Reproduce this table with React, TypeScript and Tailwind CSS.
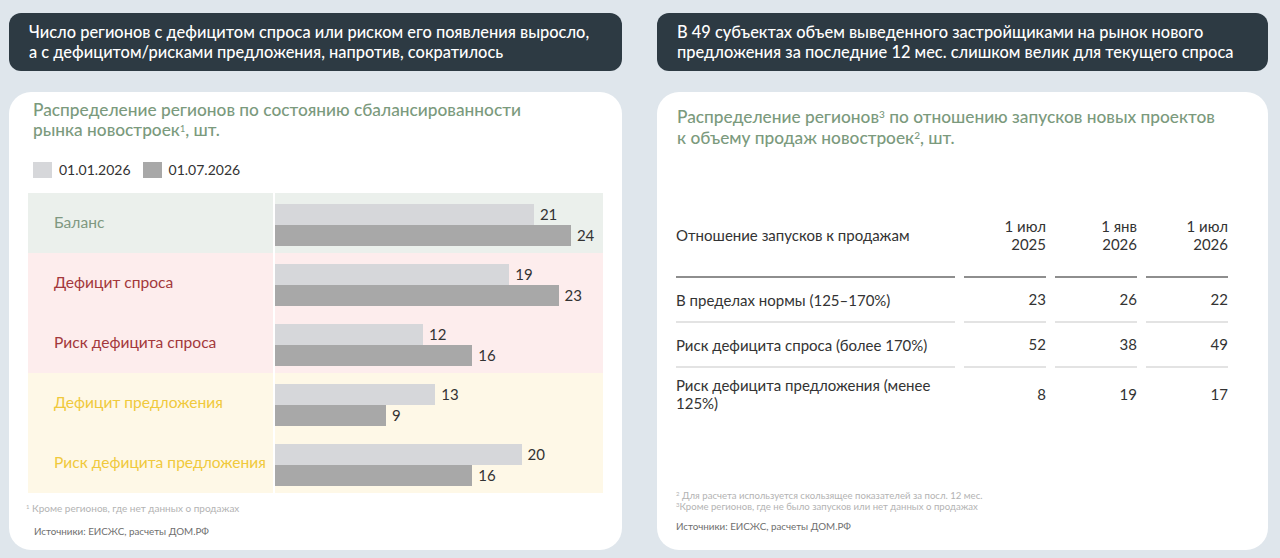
import React from "react";

const font = { fontFamily: "Lato, 'Noto Sans', sans-serif" };

const unit = 12.33;

const rows = [
  { label: "Баланс", band: "green", a: 21, b: 24 },
  { label: "Дефицит спроса", band: "red", a: 19, b: 23 },
  { label: "Риск дефицита спроса", band: "red", a: 12, b: 16 },
  { label: "Дефицит предложения", band: "yellow", a: 13, b: 9 },
  { label: "Риск дефицита предложения", band: "yellow", a: 20, b: 16 },
];

const bandBg: Record<string, string> = {
  green: "bg-[#ebf0ec]",
  red: "bg-[#fdeded]",
  yellow: "bg-[#fef8e7]",
};

const bandText: Record<string, string> = {
  green: "text-[#7f9881]",
  red: "text-[#a3383b]",
  yellow: "text-[#f0c93c]",
};

const table = [
  { label: "В пределах нормы (125–170%)", v: [23, 26, 22] },
  { label: "Риск дефицита спроса (более 170%)", v: [52, 38, 49] },
  { label: "Риск дефицита предложения (менее 125%)", v: [8, 19, 17] },
];

const Bar = ({ value, color }: { value: number; color: string }) => (
  <div className="flex items-center h-[21px]">
    <div className={`h-full ${color}`} style={{ width: value * unit }} />
    <span className="ml-[6px] text-[15px] text-[#333]">{value}</span>
  </div>
);

const Header = ({ children }: { children: React.ReactNode }) => (
  <div className="h-[58px] rounded-xl bg-[#2d3a43] px-[20px] flex items-center text-white text-[16.4px] leading-[20px] font-medium">
    <p>{children}</p>
  </div>
);

export default function App() {
  return (
    <div style={font} className="w-[1280px] h-[558px] bg-[#dfe6ec] pl-[9px] pt-[13px] flex gap-[35px] overflow-hidden">
      {/* left */}
      <div className="w-[613px] flex flex-col gap-[21px]">
        <Header>
          Число регионов с дефицитом спроса или риском его появления выросло,
          <br />а с дефицитом/рисками предложения, напротив, сократилось
        </Header>

        <div className="h-[458px] bg-white rounded-[22px] pt-[8px] flex flex-col">
          <h2 className="px-[24px] text-[17.3px] leading-[20px] font-medium text-[#7b9a7d]">
            Распределение регионов по состоянию сбалансированности
            <br />
            рынка новостроек<sup className="text-[9px]">1</sup>, шт.
          </h2>

          <div className="px-[24px] mt-[19px] flex items-center text-[14px] text-[#333]">
            <span className="w-[19px] h-[16px] bg-[#d6d7da]" />
            <span className="ml-[7px]">01.01.2026</span>
            <span className="ml-[12px] w-[19px] h-[16px] bg-[#a8a8a8]" />
            <span className="ml-[7px]">01.07.2026</span>
          </div>

          <div className="mx-[19px] mt-[13px] flex flex-col">
            {rows.map((r) => (
              <div key={r.label} className={`flex h-[60px] ${bandBg[r.band]}`}>
                <div className={`w-[245px] pl-[26px] flex items-center text-[15.6px] ${bandText[r.band]}`}>
                  {r.label}
                </div>
                <div className="flex-1 border-l-2 border-white pt-[11px]">
                  <Bar value={r.a} color="bg-[#d6d7da]" />
                  <Bar value={r.b} color="bg-[#a8a8a8]" />
                </div>
              </div>
            ))}
          </div>

          <p className="mt-[8px] pl-[17px] text-[10px] text-[#b3b3b3]">
            <sup className="text-[6px]">1</sup> Кроме регионов, где нет данных о продажах
          </p>
          <p className="mt-[8px] pl-[25px] text-[9.8px] text-[#6e6e6e]">
            Источники: ЕИСЖС, расчеты ДОМ.РФ
          </p>
        </div>
      </div>

      {/* right */}
      <div className="w-[611px] flex flex-col gap-[21px]">
        <Header>
          В 49 субъектах объем выведенного застройщиками на рынок нового
          <br />
          предложения за последние 12 мес. слишком велик для текущего спроса
        </Header>

        <div className="h-[458px] bg-white rounded-[22px] pt-[14px] pb-[18px] flex flex-col">
          <h2 className="px-[20px] text-[17.3px] leading-[21px] font-medium text-[#7b9a7d]">
            Распределение регионов<sup className="text-[10px]">3</sup> по отношению запусков новых проектов
            <br />к объему продаж новостроек<sup className="text-[10px]">2</sup>, шт.
          </h2>

          <div className="mt-[69px] px-[19px] grid grid-cols-[279px_82px_82px_82px] gap-x-[9px] text-[15px] text-[#333]">
            <div className="border-b-2 border-[#8e8e8e] pb-[23px] pt-[9px] leading-[18px]">
              Отношение запусков к продажам
            </div>
            {["1 июл|2025", "1 янв|2026", "1 июл|2026"].map((h, i) => (
              <div key={i} className="border-b-2 border-[#8e8e8e] pb-[23px] text-right leading-[18px]">
                {h.split("|")[0]}
                <br />
                {h.split("|")[1]}
              </div>
            ))}

            {table.map((r, ri) => (
              <React.Fragment key={r.label}>
                <div
                  className={`flex items-center leading-[18px] ${
                    ri < 2 ? "h-[45px] border-b-2 border-[#e3e3e3]" : "pt-[8px]"
                  }`}
                >
                  {r.label}
                </div>
                {r.v.map((v, i) => (
                  <div
                    key={i}
                    className={`flex items-center justify-end ${
                      ri < 2 ? "h-[45px] border-b-2 border-[#e3e3e3]" : "pt-[8px]"
                    }`}
                  >
                    {v}
                  </div>
                ))}
              </React.Fragment>
            ))}
          </div>

          <div className="mt-auto px-[19px] text-[9.6px] leading-[11px] text-[#b3b3b3]">
            <p>
              <sup className="text-[6px]">2</sup> Для расчета используется скользящее показателей за посл. 12 мес.
            </p>
            <p>
              <sup className="text-[6px]">3</sup>Кроме регионов, где не было запусков или нет данных о продажах
            </p>
            <p className="mt-[9px] text-[9.8px] text-[#6e6e6e]">Источники: ЕИСЖС, расчеты ДОМ.РФ</p>
          </div>
        </div>
      </div>
    </div>
  );
}
